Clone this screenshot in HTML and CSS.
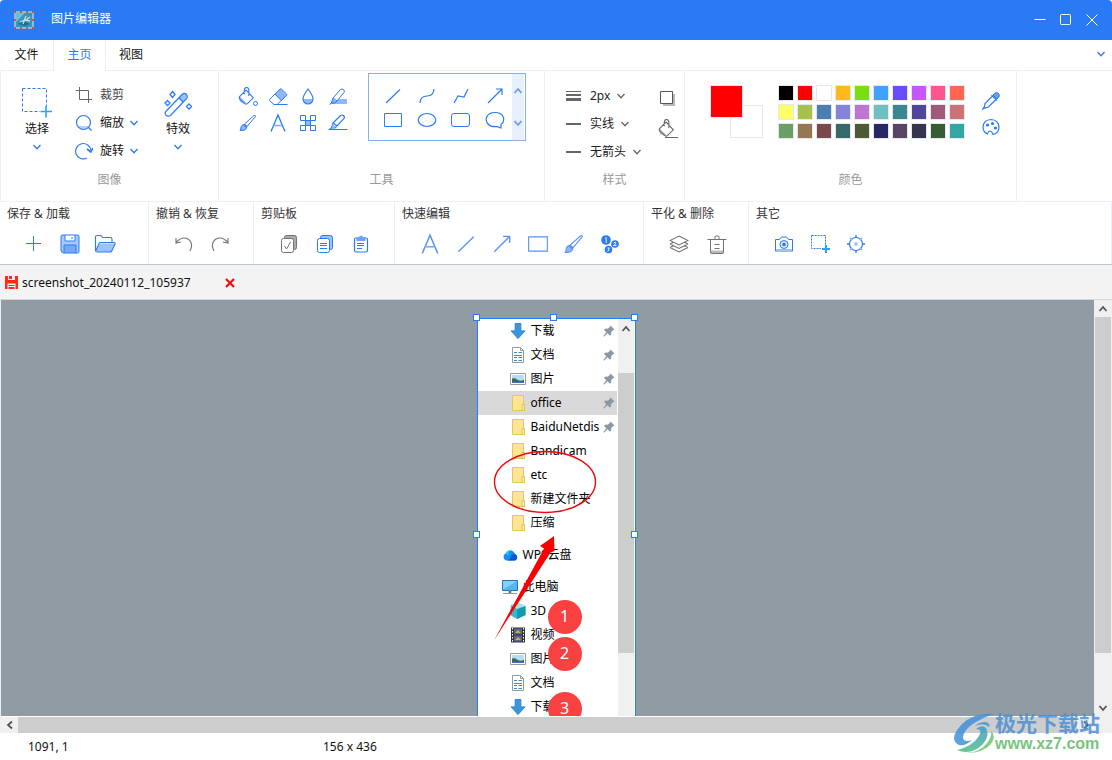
FILE: index.html
```html
<!DOCTYPE html>
<html lang="zh-CN">
<head>
<meta charset="utf-8">
<title>图片编辑器</title>
<link rel="stylesheet" href="styles.css">
</head>
<body>
<svg class="sprite" aria-hidden="true">
  <symbol id="chev" viewBox="0 0 10 10"><path d="M1.500 3l3.500 3.800L8.500 3" fill="none" stroke="currentColor" stroke-width="1.300"/></symbol>
  <symbol id="chev-up" viewBox="0 0 10 10"><path d="M1.500 7L5 3l3.500 4" fill="none" stroke="currentColor" stroke-width="1.800"/></symbol>
  <symbol id="select" viewBox="0 0 30 30"><path d="M.5.500H24.500V18M.500.500V23.500H18" fill="none" stroke="#2b7af5" stroke-dasharray="3 2"/><path d="M24 18v11.500M18.500 23.500H30" stroke="#2ba0ff" stroke-width="1.600"/></symbol>
  <symbol id="select-small" viewBox="0 0 20 20"><path d="M1.500 1.500H15.500V11M1.500 1.500V14.500H11" fill="none" stroke="#2b7af5" stroke-dasharray="2 1"/><path d="M16 11v8M12 15h8" stroke="#2ba0ff" stroke-width="2"/></symbol>
  <symbol id="crop" viewBox="0 0 18 18"><path d="M1 4.500h12.500V17M4.500 1v12.500H17" fill="none" stroke="#666"/></symbol>
  <symbol id="zoomer" viewBox="0 0 18 18"><path d="M2.500 12a7 7 0 0 0 12 0z" fill="#b9d2fb"/><circle cx="8.500" cy="8.500" r="7" fill="none" stroke="currentColor" stroke-width="1.200"/><path d="M13.500 13.500l3 3" stroke="currentColor" stroke-width="1.200"/></symbol>
  <symbol id="rotate" viewBox="0 0 18 18"><path d="M12 16A7.700 7.700 0 1 1 16 8.500" fill="none" stroke="currentColor" stroke-width="1.200"/><path d="M12 7l3.800 3L18 6" fill="none" stroke="currentColor" stroke-width="1.600"/></symbol>
  <symbol id="wand" viewBox="0 0 28 28"><path d="M15 8l4-4.500q3-1.500 4.500 2L19 12z" fill="#9dc2ff"/><path d="M1.800 21.500L18.500 4q2-1.500 4 .5 1.500 2 0 4L6.500 25.500q-2.500 1.500-4.500-.3-1.500-1.700-.2-3.700zM15 8l4 4" fill="none" stroke="currentColor" stroke-width="1.200"/><path d="M8.500 1.500L11 4.500l-2.500 3L6 4.500zM3.500 10.500L6 13l-2.500 2.500L1 13zM25 14l2.500 2.500L25 19l-2.500-2.500z" fill="none" stroke="currentColor" stroke-width="1.300"/></symbol>
  <symbol id="bucket" viewBox="0 0 20 20"><path d="M1.500 10l8 8-1.500 1-6-2.500z" fill="var(--tint)"/><path d="M9 3.500L17 12l-6.500 6.500q-1.500 1-3 0L2 13.500q-1.200-1.500 0-3zM7 8V3q.5-2.500 2.500-2.500T12 3v7" fill="none" stroke="currentColor" stroke-width="1.200"/></symbol>
  <symbol id="fill" viewBox="0 0 20 20"><use href="#bucket" width="18" height="18"/><circle cx="17.500" cy="16.500" r="2" fill="#fff" stroke="currentColor"/></symbol>
  <symbol id="bgfill" viewBox="0 0 20 20"><use href="#bucket" width="18" height="18"/><path d="M7 18.500h13" stroke="currentColor"/></symbol>
  <symbol id="eraser" viewBox="0 0 20 20"><path d="M7 7l5.500-5.500L19 8l-5.800 5.500z" fill="#8fb8fc"/><path d="M1.500 12.500L12 2.200q.8-.7 1.600 0L18.500 7q.8.800 0 1.600L9 17.500H6L1.500 13.500q-.5-.5 0-1zM7 7l6.200 6.500M6 17.500h13.500" fill="none" stroke="currentColor"/></symbol>
  <symbol id="drop" viewBox="0 0 20 20"><path d="M5 12a5 5 0 0 0 10 0z" fill="#8fb8fc"/><path d="M10 2q-5 6.500-5 10a5 5 0 0 0 10 0Q15 8.500 10 2z" fill="none" stroke="currentColor" stroke-width="1.200"/></symbol>
  <symbol id="marker" viewBox="0 0 20 20"><path d="M9 12h10v5H2l2-3z" fill="#8fb8fc"/><path d="M5 11l7.500-8.500q1.500-1 3 0 1.500 1.500.5 3L9 14zM5 11l-1.500 5H7l2-2M3.500 16L1.500 17.500" fill="#fff" stroke="currentColor"/><path d="M4.500 12L8 15l-4 1z" fill="#8fb8fc" stroke="currentColor" stroke-width=".6"/></symbol>
  <symbol id="pen" viewBox="0 0 20 20"><path d="M5 10l7.500-7.500q1.500-1 3 0 1.500 1.500.5 3L9 13zM5 10l-1.500 5H7l2-2M3.500 15L1.500 16.500H19.500" fill="none" stroke="currentColor" stroke-width="1.200"/><path d="M4.500 11L8 14l-4 1z" fill="#8fb8fc"/></symbol>
  <symbol id="brush" viewBox="0 0 20 20"><path d="M2 17.500q1-1 1-3.500 1-3 4-2.500 2.500 1.500 1.500 4-1.500 2.500-6.500 2z" fill="#8fb8fc" stroke="currentColor"/><path d="M6.500 11L16 2.500q1.500-.5 1.500 1L9 13.500zM5.500 12l3 2.500" fill="none" stroke="currentColor"/></symbol>
  <symbol id="type" viewBox="0 0 20 20"><path d="M3 18.500L10 2l7 16.500" fill="none" stroke="currentColor" stroke-width="1.300"/><path d="M5.500 12.500h9" stroke="#7aaaf8" stroke-width="1.500"/></symbol>
  <symbol id="mosaic" viewBox="0 0 20 20"><path d="M7.500 7.500h5v5h-5z" fill="#8fb8fc"/><path d="M2.500 2.500h5v5h-5zM12.500 2.500h5v5h-5zM2.500 12.500h5v5h-5zM12.500 12.500h5v5h-5zM7.500 7.500h5v5h-5z" fill="none" stroke="currentColor"/></symbol>
  <symbol id="line" viewBox="0 0 20 20"><path d="M3 17L17 3.500" stroke="currentColor" stroke-width="1.200"/></symbol>
  <symbol id="curve" viewBox="0 0 20 20"><path d="M3 17q.5-7 7-7 6.500 0 7-7" fill="none" stroke="currentColor" stroke-width="1.200"/></symbol>
  <symbol id="poly" viewBox="0 0 20 20"><path d="M3 17l4-7 6 1 4-8" fill="none" stroke="currentColor" stroke-width="1.200"/></symbol>
  <symbol id="arrow" viewBox="0 0 20 20"><path d="M3 17L17 3M11 3h6v6" fill="none" stroke="currentColor" stroke-width="1.200"/></symbol>
  <symbol id="rect" viewBox="0 0 20 20"><path d="M1.500 3.500h17v13h-17z" fill="none" stroke="currentColor"/></symbol>
  <symbol id="oval" viewBox="0 0 20 20"><ellipse cx="10" cy="10" rx="8.800" ry="6.500" fill="none" stroke="currentColor" stroke-width="1.200"/></symbol>
  <symbol id="round" viewBox="0 0 20 20"><rect x=".5" y="3.500" width="18" height="13" rx="2.500" fill="none" stroke="currentColor"/></symbol>
  <symbol id="bubble" viewBox="0 0 20 20"><path d="M16 18q-2-.3-3.500-1.500Q6 17.500 3 14 .5 11 1.500 7.500 3.500 2.500 10 2.500t8.500 5Q19.500 12 16 14.500z" fill="none" stroke="currentColor" stroke-width="1.200"/></symbol>
  <symbol id="dropper" viewBox="0 0 18 18"><path d="M11 3l2-2q2-1 3.500.5t.5 3.500l-2 2z" fill="#6ea1ec" stroke="currentColor"/><path d="M9.500 3l5.500 5.500M10.500 4L3 11.500l-.5 3L.800 17l2.500-1.200 3-.8L14 7.500" fill="none" stroke="currentColor" stroke-width="1.200"/></symbol>
  <symbol id="palette" viewBox="0 0 18 18"><path d="M5.500 16Q1 14 1 9q.5-7 8-7.500 7.500.5 8 7.500 0 6-6 7.500-.8-3-3-3.500-2 .3-2.500 3z" fill="none" stroke="currentColor" stroke-width="1.200"/><g fill="currentColor"><circle cx="5.500" cy="7" r="1.600"/><circle cx="10.500" cy="5.500" r="1.600"/><circle cx="13.500" cy="10" r="1.600"/></g></symbol>
  <symbol id="plus" viewBox="0 0 20 20"><path d="M9.500 2v15M2 9.500h15" stroke="currentColor"/></symbol>
  <symbol id="floppy" viewBox="0 0 20 20"><path d="M1 1h18v18H1z" fill="#a9c9fd"/><path d="M5 1h10v6H5z" fill="#fff"/><path d="M4 11h12v8H4z" fill="#78a9f9"/><path d="M1 2.500Q1 1 2.500 1h15Q19 1 19 2.500v15q0 1.500-1.500 1.500h-14L1 17zM5 1v6h10V1M12 3v2M4 19v-8h12v8" fill="none" stroke="currentColor"/></symbol>
  <symbol id="folder" viewBox="0 0 22 20"><path d="M1.500 17.500l4-8H21l-4 8.500H2.500z" fill="#9dc2ff"/><path d="M1.500 17V3Q1.500 1.500 3 1.500h4l1.500 2h8q1.500 0 1.500 1.500v3M1.500 17.500l3.500-8q.5-1 1.500-1H20q1.500 0 1 1.500L18 16.500q-.5 1.500-2 1.500H2.500" fill="none" stroke="currentColor" stroke-width="1.100"/></symbol>
  <symbol id="undo" viewBox="0 0 20 20"><path d="M2 4v5l5-1M2 8.500Q8 2 14 5q6 4.500 2 12" fill="none" stroke="currentColor" stroke-width="1.100"/></symbol>
  <symbol id="redo" viewBox="0 0 20 20"><path d="M18 4v5l-5-1M18 8.500Q12 2 6 5q-6 4.500-2 12" fill="none" stroke="currentColor" stroke-width="1.100"/></symbol>
  <symbol id="copycheck" viewBox="0 0 20 20"><rect x="5.500" y="1.500" width="12" height="14" rx="2" fill="#aaa" stroke="currentColor"/><rect x="2.500" y="4.500" width="12" height="14" rx="2" fill="#fff" stroke="currentColor"/><path d="M5.500 12l2 3 4-7" fill="none" stroke="currentColor"/></symbol>
  <symbol id="copy" viewBox="0 0 20 20"><rect x="5.500" y="1.500" width="12" height="14" rx="2" fill="#9dc2ff" stroke="currentColor"/><rect x="2.500" y="4.500" width="12" height="14" rx="2" fill="#fff" stroke="currentColor"/><path d="M5 9.500h7M5 11.500h7M5 14.500h7" stroke="currentColor"/></symbol>
  <symbol id="paste" viewBox="0 0 20 20"><rect x="3.500" y="4" width="13" height="14" rx="1.500" fill="#fff" stroke="currentColor" stroke-width="1.200"/><path d="M5.500 7V4L10 1.500 14.500 4v3z" fill="#6da2f9"/><path d="M6 9.500h7M6 11.500h7M6 14.500h5" stroke="currentColor"/></symbol>
  <symbol id="steps" viewBox="0 0 20 20"><g fill="currentColor"><circle cx="6" cy="6" r="4.800"/><circle cx="15" cy="10" r="3.800"/><circle cx="8.500" cy="15.500" r="3.800"/></g><path d="M5 4.500l1.200-1V9M13.500 9q1.500-1.500 2.500 0 0 1-2.500 2.500h3M7.500 14h2l-1.200 1.300q2.200.7-.8 2" fill="none" stroke="#fff" stroke-width=".9"/></symbol>
  <symbol id="layers" viewBox="0 0 20 20"><path d="M10 2l9 4.500-9 4.500-9-4.500zM1 10l9 4.500 9-4.500M1 13.500L10 18l9-4.500M1 10l3-1.500M19 10l-3-1.500M1 13.500L4 12M19 13.500L16 12" fill="none" stroke="currentColor" stroke-width="1.100"/></symbol>
  <symbol id="trash" viewBox="0 0 20 20"><path d="M3.500 16.500h13v3h-13z" fill="#bbb"/><path d="M.5 5.500h19M8 5V2.500q2-1.500 4 0V5M3.500 5.500V18q0 1.500 1.500 1.500h10q1.500 0 1.500-1.500V5.500M7.500 10.500h5M7.500 14.500h5" fill="none" stroke="currentColor"/></symbol>
  <symbol id="camera" viewBox="0 0 20 20"><path d="M1.500 5.500h4L7.500 3h5l2 2.500h4V17h-17z" fill="#fff" stroke="currentColor"/><path d="M2 15h16v2H2z" fill="#9dc2ff"/><circle cx="10" cy="10.500" r="4" fill="#dbe8ff" stroke="currentColor"/><circle cx="10" cy="10.500" r="1.800" fill="currentColor"/></symbol>
  <symbol id="target" viewBox="0 0 20 20"><circle cx="10" cy="10" r="6.500" fill="none" stroke="currentColor" stroke-width="1.200"/><path d="M8.500 8.500h3v3h-3z" fill="#8fb8fc"/><path d="M10 1v3M10 16v3M1 10h3M16 10h3" stroke="currentColor" stroke-width="1.300"/><path d="M4 4l2 2M14 14l2 2M16 4l-2 2M6 14l-2 2" stroke="#8fb8fc" stroke-width="2"/></symbol>
  <symbol id="down" viewBox="0 0 16 16"><path d="M5 0h6v7.500h4.500L8 16 .5 7.500H5z" fill="#3a96dd"/><path d="M5 .5h6v7.500h4L8 15.500 1 8h4z" fill="none" stroke="#2d7fc6" stroke-width=".6"/></symbol>
  <symbol id="doc" viewBox="0 0 16 16"><path d="M2.500.500h8l3 3v12h-11z" fill="#fff" stroke="#999"/><path d="M10.500.500v3h3" fill="none" stroke="#999"/><path d="M4 5.500h3M4 8.500h8M4 10.500h3M4 13.500h3M8.500 10.500H12M8.500 13.500H12M8.500 5.500H12" stroke="#2f8bcb"/></symbol>
  <symbol id="pic" viewBox="0 0 16 16"><path d="M.5 2.500h15v11H.500z" fill="#fff" stroke="#999"/><path d="M2 4h12v8H2z" fill="#b6dcf8"/><path d="M2 7.500q3-1 5 1t7 .5v3H2z" fill="#376c65"/><path d="M2 11h12v1H2z" fill="#397ab8"/></symbol>
  <symbol id="dir" viewBox="0 0 16 16"><path d="M2.500.500h11v15h-11z" fill="#ffe592" stroke="#e8c65a"/><path d="M12 9.500h2.500v6H12z" fill="#ffe592" stroke="#dcb64a" stroke-width=".8"/></symbol>
  <symbol id="cloud" viewBox="0 0 16 16"><path d="M4 13.500a3.800 3.800 0 0 1-.3-7A5 5 0 0 1 13 7a3.400 3.400 0 0 1-.5 6.500z" fill="#118cf0"/><path d="M5 13.500Q9 13 9 8.500q1-1.500 4-1.500a3.400 3.400 0 0 1-.5 6.500z" fill="#0757dd"/><path d="M3.700 6.500A5 5 0 0 1 10 3.300Q6 5 6.500 9z" fill="#25c9e8"/></symbol>
  <symbol id="pc" viewBox="0 0 16 16"><path d="M.5 1.500h15v10H.500z" fill="#54b5f3" stroke="#2675ae"/><path d="M1 2h14L1 10.500z" fill="#88d0fb"/><path d="M7 12h2v2H7zM1 14.500h14" stroke="#8d9ba7"/></symbol>
  <symbol id="cube" viewBox="0 0 16 16"><path d="M1 2l7-2 7.500 3v9L7 16l-7-4z" fill="#38b9cb"/><path d="M7 6l8.500-3v9L7 16z" fill="#149aae"/><path d="M1 2l7-2 7.500 3L7 6z" fill="#9ee6ec"/></symbol>
  <symbol id="film" viewBox="0 0 16 16"><path d="M1 .5h14v15H1z" fill="#333"/><path d="M4 1.500h8v6H4zM4 8.500h8v6H4z" fill="#54678c"/><path d="M5 6l3-3 3 3zM5 13l3-3 3 3z" fill="#e2aa35"/><path d="M2.500 1v14M13.500 1v14" stroke="#fff" stroke-dasharray="1.500 1.500"/></symbol>
  <symbol id="pin" viewBox="0 0 12 12"><path d="M7.500.500l4 4-1.500.7-2 2 .2 2-1.200 1.500-2.500-2.500L1 11.500H.3V11l3-3.700L1 4.800l1.500-1.200 2.300.2 2-1.800z" fill="#8998a5"/></symbol>
</svg>

<header class="titlebar">
  <svg class="app-logo" viewBox="0 0 20 18"><path d="M1 1h18v16H1z" fill="#3a93b8" stroke="#d9eef3"/><path d="M2 2h9L2 11z" fill="#66c2da"/><path d="M4 13l5-3 7 3-5 2z" fill="#1c708f"/><path d="M6 11l5-2 5 1M9 13l3-8M12 9l4-3" stroke="#c9dcdf" stroke-width="1.300" fill="none"/><path d="M0 0h2v2H0zM6 0h2v2H6zM12 0h2v2h-2zM18 0h2v2h-2zM0 8h2v2H0zM18 8h2v2h-2zM0 16h2v2H0zM6 16h2v2H6zM12 16h2v2h-2zM18 16h2v2h-2z" fill="#d4552e"/></svg>
  <h1 class="app-name">图片编辑器</h1>
  <div class="window-actions">
    <button aria-label="最小化"><svg viewBox="0 0 12 12"><path d="M.5 5.500h11" stroke="#fff"/></svg></button>
    <button aria-label="最大化"><svg viewBox="0 0 12 12"><rect x=".5" y=".5" width="10" height="10" rx="1" fill="none" stroke="#fff"/></svg></button>
    <button aria-label="关闭"><svg viewBox="0 0 12 12"><path d="M.5.500l11 11M11.500.500l-11 11" stroke="#fff"/></svg></button>
  </div>
</header>

<nav class="menu-tabs">
  <button class="menu-tab">文件</button>
  <button class="menu-tab active">主页</button>
  <button class="menu-tab">视图</button>
  <button class="collapse" aria-label="收起功能区"><svg class="chev"><use href="#chev"/></svg></button>
</nav>

<section class="ribbon">
  <div class="group group-image">
    <div class="group-body">
      <button class="big"><svg class="i30"><use href="#select"/></svg><span>选择</span><svg class="chev"><use href="#chev"/></svg></button>
      <div class="rows">
        <button><svg class="i18"><use href="#crop"/></svg><span class="muted-text">裁剪</span></button>
        <button><svg class="i18"><use href="#zoomer"/></svg><span>缩放</span><svg class="chev"><use href="#chev"/></svg></button>
        <button><svg class="i18"><use href="#rotate"/></svg><span>旋转</span><svg class="chev"><use href="#chev"/></svg></button>
      </div>
      <button class="big"><svg class="i28"><use href="#wand"/></svg><span>特效</span><svg class="chev"><use href="#chev"/></svg></button>
    </div>
    <div class="group-label">图像</div>
  </div>
  <div class="group group-tools">
    <div class="group-body">
      <div class="tool-grid">
        <button aria-label="填充"><svg class="i20"><use href="#fill"/></svg></button>
        <button aria-label="橡皮擦"><svg class="i20"><use href="#eraser"/></svg></button>
        <button aria-label="模糊"><svg class="i20"><use href="#drop"/></svg></button>
        <button aria-label="荧光笔"><svg class="i20"><use href="#marker"/></svg></button>
        <button aria-label="画笔"><svg class="i20"><use href="#brush"/></svg></button>
        <button aria-label="文字"><svg class="i20"><use href="#type"/></svg></button>
        <button aria-label="马赛克"><svg class="i20"><use href="#mosaic"/></svg></button>
        <button aria-label="签字笔"><svg class="i20"><use href="#pen"/></svg></button>
      </div>
      <div class="gallery">
        <div class="shape-grid">
          <button aria-label="直线"><svg class="i20"><use href="#line"/></svg></button>
          <button aria-label="曲线"><svg class="i20"><use href="#curve"/></svg></button>
          <button aria-label="折线"><svg class="i20"><use href="#poly"/></svg></button>
          <button aria-label="箭头"><svg class="i20"><use href="#arrow"/></svg></button>
          <button aria-label="矩形"><svg class="i20"><use href="#rect"/></svg></button>
          <button aria-label="椭圆"><svg class="i20"><use href="#oval"/></svg></button>
          <button aria-label="圆角矩形"><svg class="i20"><use href="#round"/></svg></button>
          <button aria-label="气泡"><svg class="i20"><use href="#bubble"/></svg></button>
        </div>
        <div class="gallery-scroll">
          <button aria-label="上一行"><svg class="chev"><use href="#chev-up"/></svg></button>
          <button aria-label="下一行"><svg class="chev flip"><use href="#chev-up"/></svg></button>
        </div>
      </div>
    </div>
    <div class="group-label">工具</div>
  </div>
  <div class="group group-style">
    <div class="group-body">
      <div class="style-rows">
        <label><svg class="i15" viewBox="0 0 15 12"><path d="M0 1.500h15" stroke="#666"/><path d="M0 5h15" stroke="#666" stroke-width="2"/><path d="M0 9.500h15" stroke="#666" stroke-width="3"/></svg><select aria-label="线宽"><option>2px</option></select><svg class="chev"><use href="#chev"/></svg></label>
        <label><svg class="i15" viewBox="0 0 15 12"><path d="M0 6h15" stroke="#666" stroke-width="2"/></svg><select aria-label="线型"><option>实线</option></select><svg class="chev"><use href="#chev"/></svg></label>
        <label><svg class="i15" viewBox="0 0 15 12"><path d="M0 6h15" stroke="#666" stroke-width="2"/></svg><select aria-label="箭头"><option>无箭头</option></select><svg class="chev"><use href="#chev"/></svg></label>
      </div>
      <div class="style-side">
        <button aria-label="阴影"><svg class="i20" viewBox="0 0 20 20"><path d="M5 5h12v12H5z" fill="#b8b8b8"/><path d="M2.500 2.500h12v12h-12z" fill="#fff" stroke="#555"/></svg></button>
        <button aria-label="背景填充"><svg class="i20 grey-bucket"><use href="#bgfill"/></svg></button>
      </div>
    </div>
    <div class="group-label">样式</div>
  </div>
  <div class="group group-color">
    <div class="group-body">
      <div class="current-colors">
        <button class="back-color" aria-label="背景色"></button>
        <button class="fore-color" aria-label="前景色"></button>
      </div>
      <div class="swatches">
        <button style="background:#000" aria-label="黑"></button><button style="background:#f00" aria-label="红"></button><button style="background:#fff" aria-label="白"></button><button style="background:#ffb919" aria-label="橙黄"></button><button style="background:#7adf10" aria-label="绿"></button><button style="background:#3fa2ff" aria-label="蓝"></button><button style="background:#6a4bff" aria-label="靛"></button><button style="background:#c656ff" aria-label="紫"></button><button style="background:#ff568f" aria-label="粉"></button><button style="background:#ff6752" aria-label="珊瑚"></button>
        <button style="background:#fdff66" aria-label="浅黄"></button><button style="background:#a6c24b" aria-label="黄绿"></button><button style="background:#4a80b1" aria-label="钢蓝"></button><button style="background:#8383d8" aria-label="浅靛"></button><button style="background:#bc76d1" aria-label="浅紫"></button><button style="background:#70bfc1" aria-label="浅青"></button><button style="background:#3b8791" aria-label="青"></button><button style="background:#4d469c" aria-label="深靛"></button><button style="background:#a25878" aria-label="梅红"></button><button style="background:#cb7377" aria-label="玫瑰"></button>
        <button style="background:#6a9e69" aria-label="灰绿"></button><button style="background:#947853" aria-label="棕"></button><button style="background:#7a4a4b" aria-label="褐红"></button><button style="background:#356a68" aria-label="深青"></button><button style="background:#4d5834" aria-label="橄榄"></button><button style="background:#282869" aria-label="藏青"></button><button style="background:#5a4463" aria-label="暗紫"></button><button style="background:#34364f" aria-label="墨蓝"></button><button style="background:#375c34" aria-label="深绿"></button><button style="background:#37a5a4" aria-label="蓝绿"></button>
      </div>
      <div class="color-side">
        <button aria-label="取色器"><svg class="i18"><use href="#dropper"/></svg></button>
        <button aria-label="调色板"><svg class="i18"><use href="#palette"/></svg></button>
      </div>
    </div>
    <div class="group-label">颜色</div>
  </div>
</section>

<section class="quickbar">
  <div class="quick q-save"><h2>保存 &amp; 加载</h2><div class="quick-row">
    <button aria-label="新建"><svg class="i20"><use href="#plus"/></svg></button>
    <button aria-label="保存"><svg class="i20"><use href="#floppy"/></svg></button>
    <button aria-label="打开"><svg class="i22"><use href="#folder"/></svg></button></div></div>
  <div class="quick q-undo"><h2>撤销 &amp; 恢复</h2><div class="quick-row grey">
    <button aria-label="撤销"><svg class="i20"><use href="#undo"/></svg></button>
    <button aria-label="恢复"><svg class="i20"><use href="#redo"/></svg></button></div></div>
  <div class="quick q-clip"><h2>剪贴板</h2><div class="quick-row">
    <button class="grey" aria-label="选择复制"><svg class="i20"><use href="#copycheck"/></svg></button>
    <button aria-label="复制"><svg class="i20"><use href="#copy"/></svg></button>
    <button aria-label="粘贴"><svg class="i20"><use href="#paste"/></svg></button></div></div>
  <div class="quick q-edit"><h2>快速编辑</h2><div class="quick-row soft">
    <button aria-label="文字"><svg class="i22"><use href="#type"/></svg></button>
    <button aria-label="直线"><svg class="i22"><use href="#line"/></svg></button>
    <button aria-label="箭头"><svg class="i22"><use href="#arrow"/></svg></button>
    <button aria-label="矩形"><svg class="i22"><use href="#rect"/></svg></button>
    <button aria-label="画笔"><svg class="i22"><use href="#brush"/></svg></button>
    <button class="solid" aria-label="序号"><svg class="i20"><use href="#steps"/></svg></button></div></div>
  <div class="quick q-flat"><h2>平化 &amp; 删除</h2><div class="quick-row grey">
    <button aria-label="平化"><svg class="i20"><use href="#layers"/></svg></button>
    <button aria-label="删除"><svg class="i20"><use href="#trash"/></svg></button></div></div>
  <div class="quick q-other"><h2>其它</h2><div class="quick-row">
    <button aria-label="截屏"><svg class="i20"><use href="#camera"/></svg></button>
    <button aria-label="选区"><svg class="i20"><use href="#select-small"/></svg></button>
    <button aria-label="定位"><svg class="i20"><use href="#target"/></svg></button></div></div>
</section>

<div class="file-tabs">
  <svg class="i13" viewBox="0 0 13 13"><path d="M0 0h13v13H0z" fill="#ff2a1b"/><path d="M3 0h7v4H3zM2.500 7.500h8V13h-8z" fill="#f3f3f3"/><path d="M4 0h3v3H4zM3.500 9h6v1h-6zM3.500 11h6v2h-6z" fill="#ff2a1b"/></svg>
  <span class="file-name">screenshot_20240112_105937</span>
  <button class="file-close" aria-label="关闭文件"><svg class="i10" viewBox="0 0 10 10"><path d="M1 1l8 8M9 1L1 9" stroke="#f00b0b" stroke-width="2.200"/></svg></button>
</div>

<main class="workspace">
  <div class="stage">
    <div class="frame">
      <ul class="tree">
        <li><svg><use href="#down"/></svg><span>下载</span><svg class="pin"><use href="#pin"/></svg></li>
        <li><svg><use href="#doc"/></svg><span>文档</span><svg class="pin"><use href="#pin"/></svg></li>
        <li><svg><use href="#pic"/></svg><span>图片</span><svg class="pin"><use href="#pin"/></svg></li>
        <li class="selected"><svg><use href="#dir"/></svg><span>office</span><svg class="pin"><use href="#pin"/></svg></li>
        <li><svg><use href="#dir"/></svg><span>BaiduNetdis</span><svg class="pin"><use href="#pin"/></svg></li>
        <li><svg><use href="#dir"/></svg><span>Bandicam</span></li>
        <li><svg><use href="#dir"/></svg><span>etc</span></li>
        <li><svg><use href="#dir"/></svg><span>新建文件夹</span></li>
        <li><svg><use href="#dir"/></svg><span>压缩</span></li>
        <li class="root"><svg><use href="#cloud"/></svg><span>WPS云盘</span></li>
        <li class="root"><svg><use href="#pc"/></svg><span>此电脑</span></li>
        <li><svg><use href="#cube"/></svg><span>3D</span></li>
        <li><svg><use href="#film"/></svg><span>视频</span></li>
        <li><svg><use href="#pic"/></svg><span>图片</span></li>
        <li><svg><use href="#doc"/></svg><span>文档</span></li>
        <li><svg><use href="#down"/></svg><span>下载</span></li>
      </ul>
      <div class="tree-scroll"><svg class="chev"><use href="#chev-up"/></svg><div class="tree-thumb"></div></div>
      <svg class="drawing" viewBox="0 0 157 436"><ellipse cx="67" cy="163" rx="50.500" ry="30.500" fill="none" stroke="#f00808" stroke-width="1.400"/><path d="M16 321.500L66 229.500 62 227 76 217 76.500 232 72.500 233.500z" fill="#fa0000"/></svg>
      <span class="step step-1">1</span><span class="step step-2">2</span><span class="step step-3">3</span>
      <i class="handle h-nw"></i><i class="handle h-n"></i><i class="handle h-ne"></i><i class="handle h-w"></i><i class="handle h-e"></i>
    </div>
  </div>
  <div class="vbar">
    <button aria-label="向上滚动"><svg class="chev"><use href="#chev-up"/></svg></button>
    <div class="v-track"><div class="v-thumb"></div></div>
    <button aria-label="向下滚动"><svg class="chev flip"><use href="#chev-up"/></svg></button>
  </div>
  <div class="hbar">
    <button aria-label="向左滚动"><svg class="chev left"><use href="#chev-up"/></svg></button>
    <div class="h-thumb"></div>
    <button aria-label="向右滚动"><svg class="chev right"><use href="#chev-up"/></svg></button>
  </div>
</main>

<footer class="status"><span class="position">1091, 1</span><span>156 x 436</span></footer>

<div class="brand">
  <svg viewBox="0 0 42 40"><defs><linearGradient id="swoosh" x1="0" y1="0" x2="0" y2="1"><stop offset="0" stop-color="#3f93dc"/><stop offset="1" stop-color="#4dbf84"/></linearGradient></defs><path d="M41 1Q22-1 9 11-4 25 4 31q6 4 15-4-9 3-9-3Q12 11 41 1z" fill="#4192da"/><path d="M22 13q9-4 14 1 2-4-4-5-6 0-10 4zM4 37q14 6 26-6 7-8 3-16-4-4-10 1 7 0 3 7Q20 33 4 37z" fill="url(#swoosh)"/><path d="M8 39q17 3 26-9 5-6 4-12 6 6-1 14Q27 42 8 39z" fill="#6cc86b"/></svg>
  <div class="brand-text"><strong>极光下载站</strong><span>www.xz7.com</span></div>
</div>
</body>
</html>
```
FILE: styles.css
```css
* { box-sizing: border-box; }
body {
  --blue: #2b7af5;
  --line: #ebeff7;
  --tint: #8fb8fc;
  margin: 0;
  height: 100vh;
  display: flex;
  flex-direction: column;
  overflow: hidden;
  background: #fff;
  color: #111;
  font: 12px/16px "Noto Sans", "Noto Sans CJK SC", sans-serif;
}
.sprite { position: absolute; width: 0; height: 0; }
button, select { margin: 0; padding: 0; border: 0; background: none; color: inherit; font: inherit; }
button { display: flex; align-items: center; justify-content: center; }
svg { display: block; flex: none; }
h1, h2, ul { margin: 0; padding: 0; font: inherit; list-style: none; }
.i10 { width: 10px; height: 10px; }
.i13 { width: 13px; height: 13px; }
.i15 { width: 15px; height: 12px; }
.i18 { width: 18px; height: 18px; }
.i20 { width: 20px; height: 20px; }
.i22 { width: 22px; height: 22px; }
.i28 { width: 28px; height: 28px; }
.i30 { width: 30px; height: 30px; }
.chev { width: 10px; height: 10px; color: #3579dd; }
.flip { transform: rotate(180deg); }
.left { transform: rotate(-90deg); }
.right { transform: rotate(90deg); }

.titlebar { display: flex; align-items: center; height: 40px; padding: 0 14px; flex: none; background: #2b7af5; color: #fff; border-radius: 4px 4px 0 0; }
.app-logo { width: 20px; height: 18px; }
.app-name { margin-left: 17px; padding-bottom: 2px; }
.window-actions { display: flex; gap: 14px; margin-left: auto; }
.window-actions svg { width: 12px; height: 12px; }

.menu-tabs { display: flex; height: 31px; flex: none; padding-right: 6px; border-bottom: 1px solid var(--line); }
.menu-tab { width: 53px; height: 31px; padding-bottom: 2px; }
.menu-tab.active { color: var(--blue); background: #fff; border: solid var(--line); border-width: 0 1px; }
.menu-tab.active + .menu-tab { width: 50px; }
.collapse { margin-left: auto; padding-bottom: 2px; }

.ribbon { display: flex; height: 131px; flex: none; border-left: 1px solid var(--line); border-bottom: 1px solid var(--line); }
.group { display: flex; flex-direction: column; flex: none; border-right: 1px solid var(--line); color: #111; }
.group-image { width: 218px; }
.group-tools { width: 326px; }
.group-style { width: 140px; }
.group-color { width: 332px; }
.group-body { display: flex; height: 101px; }
.group-body svg { color: var(--blue); }
.group-label { text-align: center; color: #999; }
.big { flex-direction: column; justify-content: flex-start; width: 40px; padding-top: 17px; }
.big span { margin: 3px 0 5px; }
.big .i28 { margin: 2px 0 0; }
.group-image .group-body { padding-left: 16px; }
.rows { display: flex; flex-direction: column; width: 83px; margin: 10px 0 0 18px; }
.rows button { height: 28px; justify-content: flex-start; }
.rows span { margin: 0 5px 0 7px; }
.muted-text { color: #444; }
.group-tools .group-body { padding-left: 14px; }
.tool-grid { display: grid; grid-template-columns: repeat(4, 30px); grid-auto-rows: 26px; align-content: start; margin-top: 13px; }
.gallery { display: flex; width: 158px; height: 68px; margin: 2px 0 0 15px; border: 1px solid #86b3e0; }
.shape-grid { display: grid; flex: 1; grid-template-columns: repeat(4, 34px); grid-auto-rows: 24px; padding: 10px 0 0 7px; }
.gallery-scroll { display: flex; flex-direction: column; justify-content: space-between; align-items: center; width: 12px; margin-right: 1px; padding: 12px 0; background: #e8f0fe; }
.gallery-scroll .chev { color: #6b9ce0; }
.group-style .group-body { padding-left: 21px; }
.style-rows { display: flex; flex-direction: column; width: 82px; padding-top: 11px; }
.style-rows label { display: flex; align-items: center; height: 28px; }
.style-rows select { appearance: none; margin: 0 5px 0 9px; color: #222; }
.group-body .style-rows .chev { color: #666; }
.style-side { padding-top: 18px; margin-left: 10px; display: flex; flex-direction: column; gap: 10px; }
.group-body .grey-bucket { color: #666; --tint: #bbb; }
.group-color .group-body { padding: 14px 0 0 25px; }
.current-colors { display: grid; grid-template-columns: 20px 13px 20px; grid-template-rows: 20px 13px 20px; width: 53px; }
.fore-color, .back-color { border: 1px solid #e5e8ee; }
.fore-color { grid-area: 1 / 1 / 3 / 3; background: #f00; }
.back-color { grid-area: 2 / 2 / 4 / 4; background: #fff; }
.swatches { display: grid; grid-template-columns: repeat(10, 16px); grid-auto-rows: 16px; gap: 3px; margin-left: 15px; }
.swatches button { border: 1px solid #e5e8ee; }
.color-side { display: flex; flex-direction: column; gap: 8px; margin: 7px 0 0 17px; }

.quickbar { display: flex; height: 63px; flex: none; border-bottom: 1px solid #b8c7d4; }
.quick { flex: none; border-right: 1px solid var(--line); padding-top: 4px; }
.quick h2 { padding-left: 7px; color: #333; }
.quick-row { display: flex; margin-top: 4px; padding-left: 17px; color: var(--blue); }
.quick-row button { width: 36px; height: 36px; }
.quick-row.grey, .grey { color: #737373; }
.quick-row.soft { color: #5792f5; }
.soft .solid { color: var(--blue); }
.q-save { width: 149px; }
.q-save .quick-row { padding-left: 16px; }
.q-save .i22 { margin-right: 2px; }
.q-undo, .q-flat { width: 105px; }
.q-flat .quick-row { gap: 2px; }
.q-clip { width: 141px; }
.q-edit { width: 249px; }
.q-other { flex: 1; }

.file-tabs { display: flex; align-items: center; height: 35px; flex: none; padding: 1px 0 0 5px; background: #f3f3f3; border-bottom: 1px solid #d5d8da; }
.file-name { margin: 0 34px 0 4px; }

.workspace { display: grid; flex: 1; min-height: 0; grid-template: minmax(0, 1fr) 17px / minmax(0, 1fr) 18px; padding-left: 1px; background: #f0f0f0; }
.stage { display: flex; justify-content: center; padding: 18px 0 0 17px; overflow: hidden; background: #919ba3; }
.frame { position: relative; display: flex; flex: none; width: 159px; height: 438px; background: #fff; border: 1px solid var(--blue); color: #000; }
.tree { width: 139px; }
.tree li { display: flex; align-items: center; height: 24px; padding-left: 32px; white-space: nowrap; }
.tree svg { width: 16px; height: 16px; }
.tree span { margin-left: 5px; }
.tree .pin { width: 12px; height: 12px; margin: 0 2px 0 auto; }
.tree .selected { background: #d9d9d9; }
.tree .root { margin-top: 8px; padding-left: 24px; }
.tree-scroll { width: 16px; margin-left: 1px; padding-top: 5px; background: #f0f0f0; }
.tree-scroll .chev { margin: 0 auto 39px 3px; color: #555; }
.tree-thumb { height: 280px; background: #cdcdcd; }
.drawing { position: absolute; inset: 0; width: 157px; height: 436px; }
.step { position: absolute; width: 34px; height: 34px; border-radius: 50%; background: #fa4142; color: #fff; font-size: 16px; line-height: 32px; text-align: center; }
.step-1 { left: 70px; top: 281px; }
.step-2 { left: 70px; top: 318px; }
.step-3 { left: 70px; top: 373px; }
.handle { position: absolute; width: 7px; height: 7px; background: #fff; border: 1px solid var(--blue); }
.h-nw { left: -5px; top: -5px; }
.h-n { left: 72px; top: -5px; }
.h-ne { right: -3px; top: -5px; }
.h-w { left: -5px; top: 212px; }
.h-e { right: -3px; top: 212px; }
.vbar { display: flex; flex-direction: column; padding: 0 1px; }
.vbar button { height: 17px; }
.workspace button .chev { color: #555; }
.v-track { flex: 1; min-height: 0; }
.v-thumb { height: 88%; background: #cdcdcd; }
.hbar { display: flex; border-top: 1px solid #fff; }
.hbar button { width: 17px; }
.h-thumb { flex: 1; background: #cdcdcd; }

.status { display: flex; flex: none; align-items: center; height: 27px; padding-left: 28px; }
.position { width: 295px; }

.brand { position: absolute; right: 12px; bottom: 7px; display: flex; align-items: center; opacity: .85; }
.brand svg { width: 42px; height: 40px; }
.brand-text { display: flex; flex-direction: column; }
.brand strong { font-size: 21px; line-height: 22px; color: #4a90d4; }
.brand span { font: bold 16px/19px "Liberation Sans", sans-serif; color: #62b96a; }
```
